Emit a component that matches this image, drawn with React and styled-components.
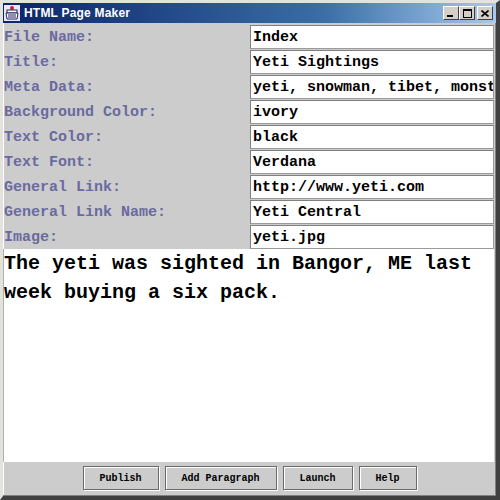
import React from 'react';
import styled, { createGlobalStyle } from 'styled-components';

const GlobalStyle = createGlobalStyle`
  html, body { margin: 0; padding: 0; background: #ffffff; }
  * { box-sizing: border-box; }
`;

const Frame = styled.div`
  width: 500px;
  height: 500px;
  display: flex;
  flex-direction: column;
  background: #cccccc;
  border-style: solid;
  border-width: 3px 4px 4px 3px;
  border-color: #e4e2dc #404040 #404040 #e4e2dc;
  box-shadow: inset -1px -1px 0 #808080, inset 1px 1px 0 #ffffff;
`;

const TitleBar = styled.div`
  height: 20px;
  flex-shrink: 0;
  display: flex;
  align-items: center;
  padding: 0 3px 0 1px;
  gap: 4px;
  background: linear-gradient(to right, #0a246a, #3a6ea5 65%, #a6caf0);
`;

const Caption = styled.span`
  flex: 1;
  color: #ffffff;
  font: bold 12px "Liberation Sans", Arial, sans-serif;
  letter-spacing: 0.2px;
`;

const CtrlGroup = styled.div`
  display: flex;
`;

const CtrlButton = styled.div`
  width: 16px;
  height: 14px;
  margin-left: ${p => (p.$gap ? '2px' : '0')};
  background: #d4d0c8;
  border: 1px solid;
  border-color: #ffffff #404040 #404040 #ffffff;
  display: flex;
  align-items: center;
  justify-content: center;
`;

const Form = styled.div`
  display: grid;
  grid-template-columns: 247px 244px;
  grid-auto-rows: 24px;
  row-gap: 1px;
  padding-top: 2px;
  flex-shrink: 0;
`;

const Label = styled.div`
  display: flex;
  align-items: center;
  padding-left: 1px;
  color: #6a6aa0;
  font: bold 15px "Liberation Mono", "Courier New", monospace;
  white-space: nowrap;
`;

const Field = styled.div`
  display: flex;
  align-items: center;
  padding-left: 2px;
  background: #ffffff;
  border: 1px solid;
  border-color: #808080 #9a9a9a #9a9a9a #808080;
  color: #000000;
  font: bold 15px "Liberation Mono", "Courier New", monospace;
  white-space: nowrap;
  overflow: hidden;
`;

const TextArea = styled.div`
  flex: 1;
  background: #ffffff;
  border-left: 1px solid #b0b0b0;
  margin-right: 2px;
  color: #000000;
  font: bold 20px/29px "Liberation Mono", "Courier New", monospace;
`;

const ButtonBar = styled.div`
  height: 34px;
  flex-shrink: 0;
  display: flex;
  justify-content: center;
  align-items: center;
  gap: 6px;
  padding-bottom: 2px;
`;

const Button = styled.div`
  width: ${p => p.$w}px;
  height: 24px;
  display: flex;
  align-items: center;
  justify-content: center;
  background: #cccccc;
  border: 1px solid #6a6a6a;
  box-shadow: inset 1px 1px 0 #ffffff, 1px 1px 0 #ffffff;
  color: #000000;
  font: bold 10px "Liberation Mono", "Courier New", monospace;
`;

const AppIcon = () => (
  <svg width="16" height="16" viewBox="0 0 16 16">
    <rect x="0" y="0" width="16" height="16" fill="#e8e8f8" />
    <circle cx="8" cy="3" r="2" fill="#d02020" />
    <rect x="3" y="5" width="10" height="3" fill="#ffffff" stroke="#202060" />
    <path d="M2 8h12l-1 6H3z" fill="#ffffff" stroke="#202060" />
    <path d="M4 10h8M4 12h8" stroke="#202060" />
  </svg>
);

const fields = [
  ['File Name:', 'Index'],
  ['Title:', 'Yeti Sightings'],
  ['Meta Data:', 'yeti, snowman, tibet, monster'],
  ['Background Color:', 'ivory'],
  ['Text Color:', 'black'],
  ['Text Font:', 'Verdana'],
  ['General Link:', 'http://www.yeti.com'],
  ['General Link Name:', 'Yeti Central'],
  ['Image:', 'yeti.jpg'],
];

const buttons = [
  ['Publish', 76],
  ['Add Paragraph', 112],
  ['Launch', 70],
  ['Help', 58],
];

export default function App() {
  return (
    <>
      <GlobalStyle />
      <Frame>
        <TitleBar>
          <AppIcon />
          <Caption>HTML Page Maker</Caption>
          <CtrlGroup>
            <CtrlButton>
              <svg width="8" height="7"><rect x="0" y="5" width="6" height="2" fill="#000" /></svg>
            </CtrlButton>
            <CtrlButton>
              <svg width="9" height="9"><rect x="0.5" y="0.5" width="8" height="8" fill="none" stroke="#000" /><rect x="0" y="0" width="9" height="2" fill="#000" /></svg>
            </CtrlButton>
            <CtrlButton $gap>
              <svg width="8" height="7"><path d="M0.5 0.5l7 6M7.5 0.5l-7 6" stroke="#000" strokeWidth="1.6" /></svg>
            </CtrlButton>
          </CtrlGroup>
        </TitleBar>
        <Form>
          {fields.map(([label, value]) => (
            <React.Fragment key={label}>
              <Label>{label}</Label>
              <Field>{value}</Field>
            </React.Fragment>
          ))}
        </Form>
        <TextArea>
          The yeti was sighted in Bangor, ME last week buying a six pack.
        </TextArea>
        <ButtonBar>
          {buttons.map(([text, w]) => (
            <Button key={text} $w={w}>{text}</Button>
          ))}
        </ButtonBar>
      </Frame>
    </>
  );
}
